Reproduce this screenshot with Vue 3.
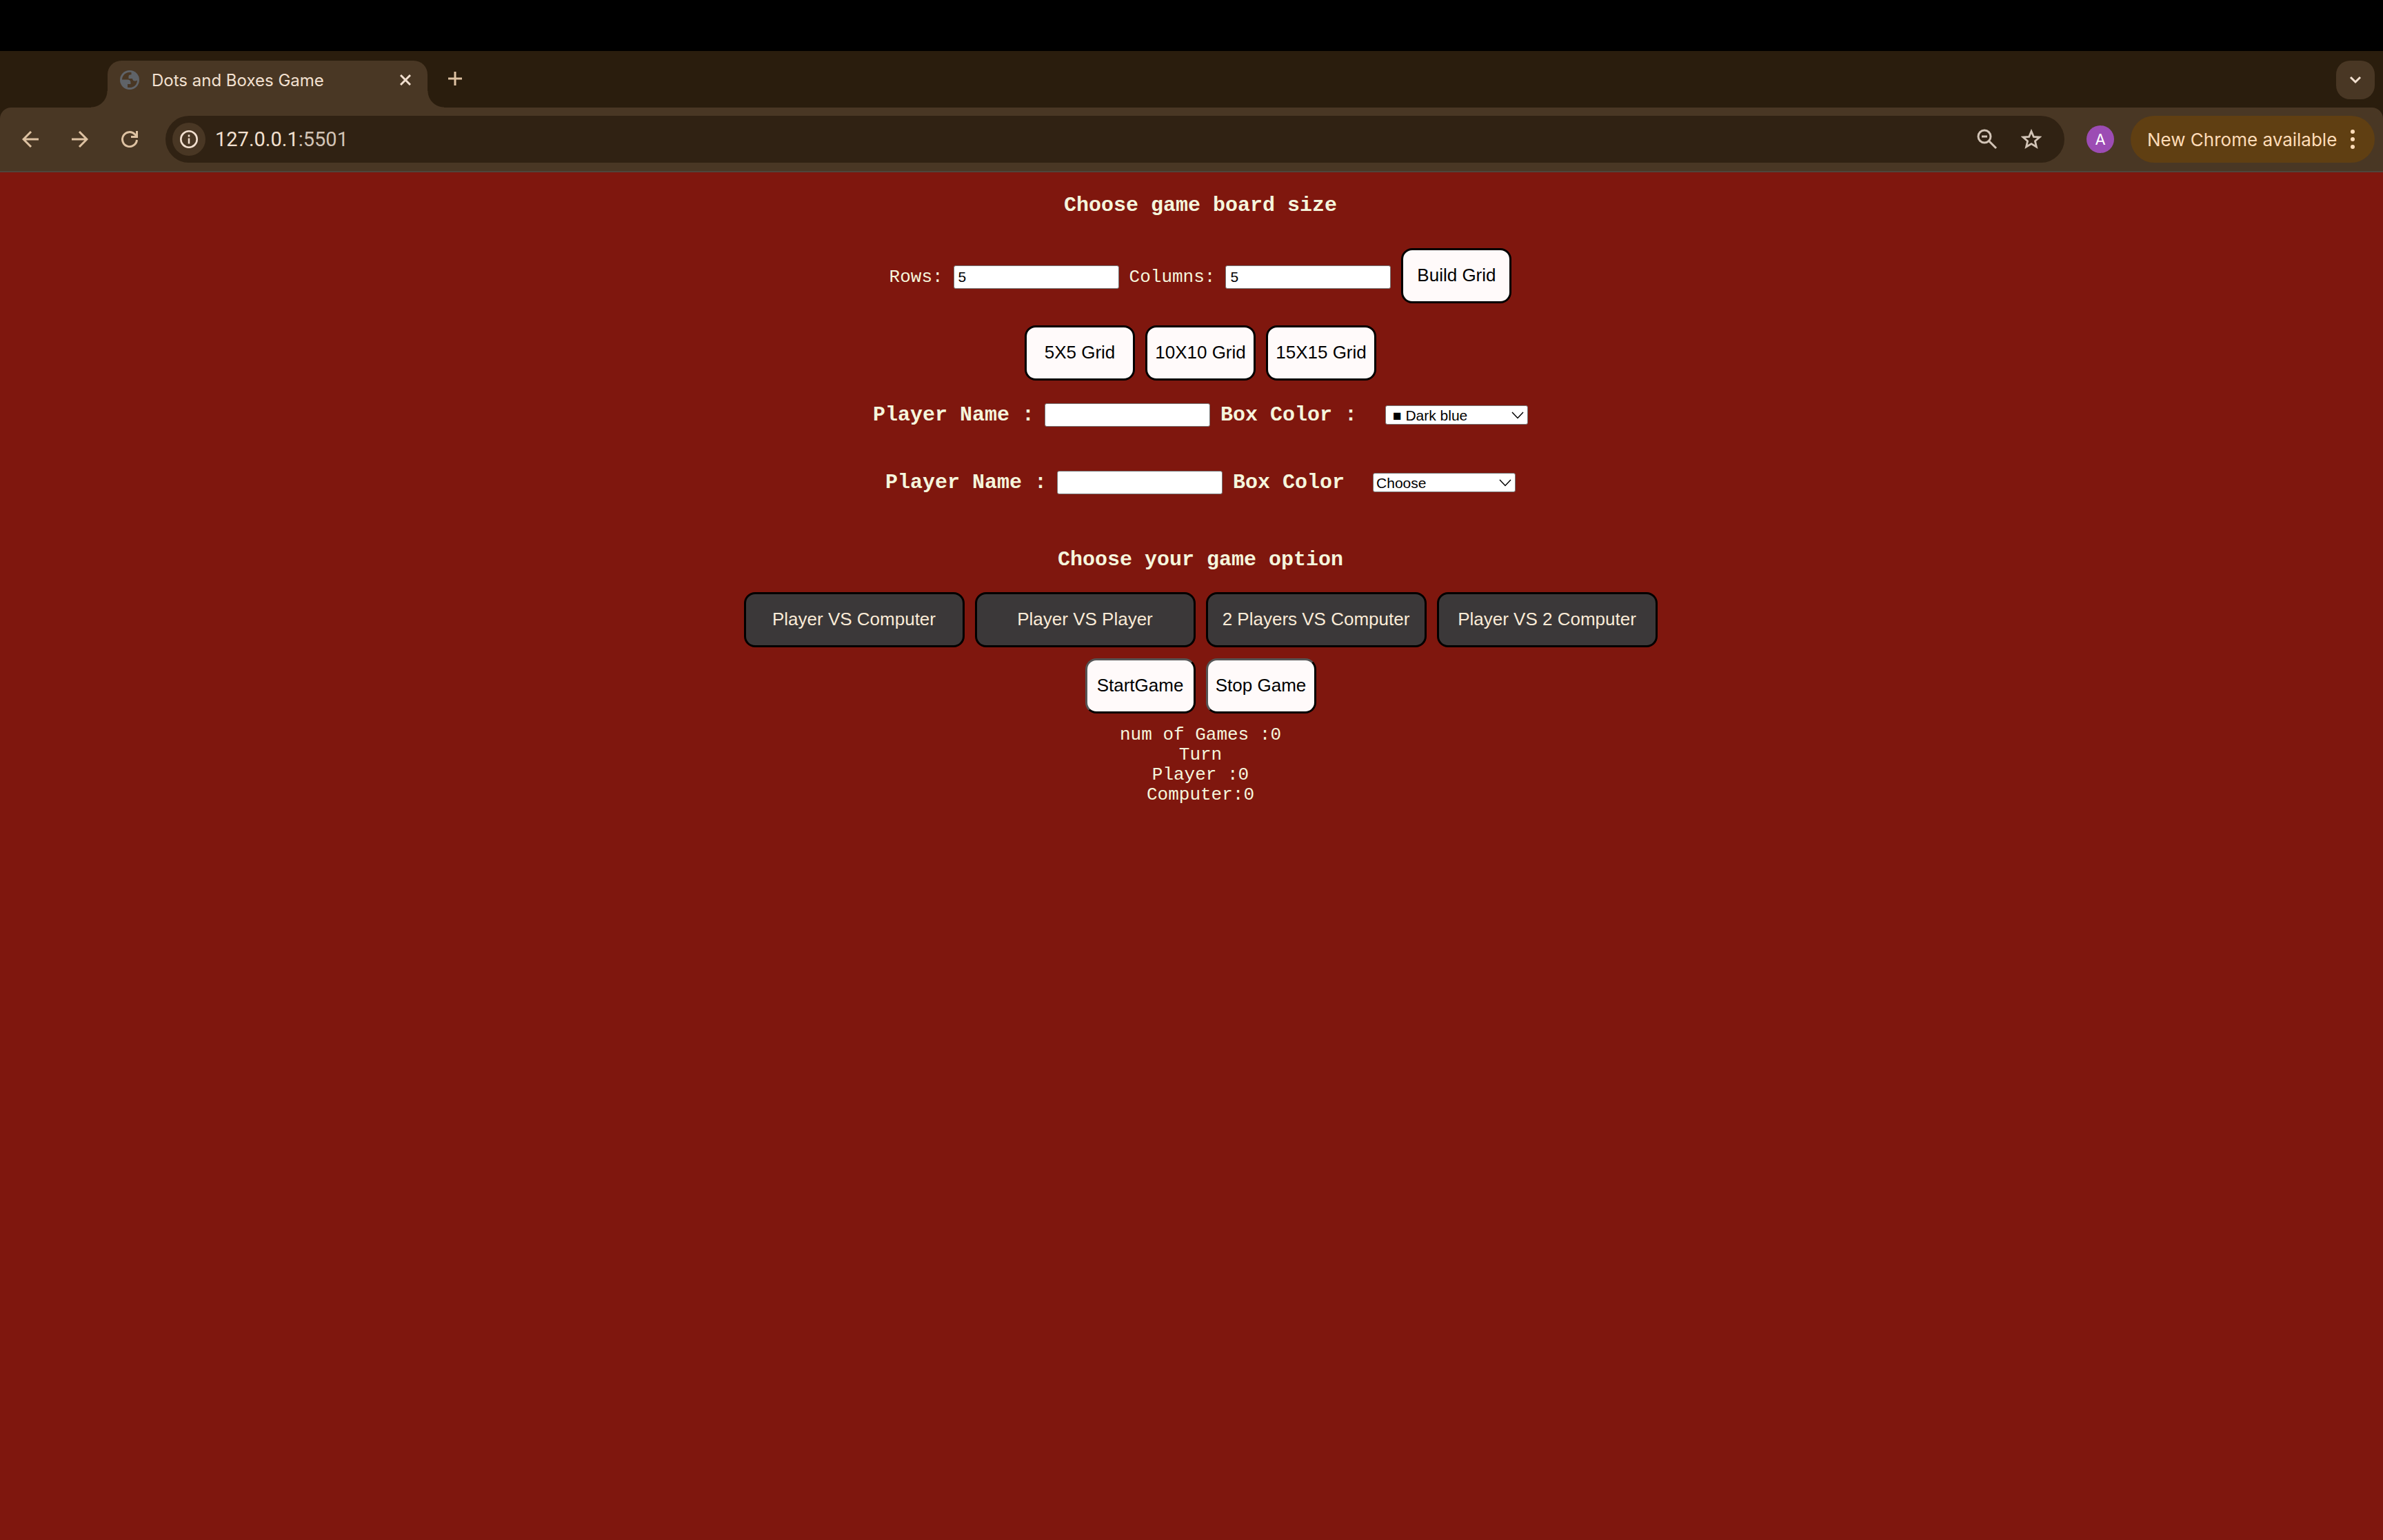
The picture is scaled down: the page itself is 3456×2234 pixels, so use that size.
<script setup>
import { ref } from 'vue'

const rows = ref(5)
const columns = ref(5)
const presets = ['5X5 Grid', '10X10 Grid', '15X15 Grid']
const modes = ['Player VS Computer', 'Player VS Player', '2 Players VS Computer', 'Player VS 2 Computer']
const players = [
  { id: 1, colorLabel: 'Box Color :', choice: '\u00a0■\u00a0Dark blue' },
  { id: 2, colorLabel: 'Box Color', choice: 'Choose' },
]
const scores = ['num of Games :0', 'Turn', 'Player :0', 'Computer:0']
</script>

<template>
  <div class="window">
    <div class="menubar"></div>
    <header>
      <div class="tabstrip">
        <div class="tab">
          <svg class="favicon" viewBox="0 0 28 28" width="28" height="28">
            <circle cx="14" cy="14" r="14" fill="#5f6368" />
            <path d="M16.500 3C10 1.800 3.500 6 3 13.500H11c3 0 4.500 1.500 4.500 4.500v2H11v4.700C18 26.500 25 22 25 14.500c-1 .8-2 1-3.500 1-2.500 0-3-1.500-3.500-3.500h-5.500V9c0-2 1-2.800 4-2.800z" fill="#493724" />
          </svg>
          <span class="title">Dots and Boxes Game</span>
          <button class="plain" aria-label="Close tab">
            <svg viewBox="0 0 16 16" width="16" height="16"><path d="M1 1l14 14M15 1L1 15" stroke="#f2e0d0" stroke-width="3" /></svg>
          </button>
        </div>
        <button class="plain newtab" aria-label="New tab">
          <svg viewBox="0 0 20 20" width="20" height="20"><path d="M10 0v20M0 10h20" stroke="#dec2a2" stroke-width="3" /></svg>
        </button>
        <button class="plain search" aria-label="Search tabs">
          <svg viewBox="0 0 18 12" width="18" height="12"><path d="M2 2l7 7 7-7" fill="none" stroke="#f2e0d0" stroke-width="3" /></svg>
        </button>
      </div>
      <div class="toolbar">
        <nav>
          <button class="plain" aria-label="Back">
            <svg viewBox="0 0 24 24" width="24" height="24"><path d="M24 12H2M13 1L2 12l11 11" fill="none" stroke="#dec2a2" stroke-width="3" /></svg>
          </button>
          <button class="plain" aria-label="Forward">
            <svg viewBox="0 0 24 24" width="24" height="24"><path d="M0 12h22M11 1l11 11-11 11" fill="none" stroke="#dec2a2" stroke-width="3" /></svg>
          </button>
          <button class="plain" aria-label="Reload">
            <svg viewBox="0 0 24 24" width="24" height="24"><path d="M22.500 13A10.500 10.500 0 1 1 19.500 4.700l3 3M22.500 0v8.500H14" fill="none" stroke="#dec2a2" stroke-width="3" /></svg>
          </button>
        </nav>
        <div class="omnibox">
          <button class="plain info" aria-label="View site information">
            <svg viewBox="0 0 26 26" width="26" height="26"><circle cx="13" cy="13" r="11.700" fill="none" stroke="#f2e0d0" stroke-width="2.600" /><path d="M13 11.500v8M13 6.500v3" stroke="#f2e0d0" stroke-width="2.500" /></svg>
          </button>
          <span class="url">127.0.0.1<span class="port">:5501</span></span>
          <button class="plain" aria-label="Zoom">
            <svg viewBox="0 0 30 30" width="30" height="30"><circle cx="11" cy="11" r="9" fill="none" stroke="#d2c4b6" stroke-width="3" /><path d="M7 11h8M17.500 17.500L28 28" stroke="#d2c4b6" stroke-width="3" /></svg>
          </button>
          <button class="plain" aria-label="Bookmark this tab">
            <svg viewBox="0 0 30 30" width="30" height="30"><path d="M15 3.500l3.300 7.800 8.600.7-6.500 5.700 2 8.300L15 21.600 7.600 26l2-8.300L3.100 12l8.600-.7z" fill="none" stroke="#d2c4b6" stroke-width="2.800" /></svg>
          </button>
        </div>
        <button class="plain avatar">A</button>
        <button class="plain update">
          New Chrome available
          <svg viewBox="0 0 6 30" width="6" height="30" fill="#ffdcb8"><circle cx="3" cy="4" r="3" /><circle cx="3" cy="15" r="3" /><circle cx="3" cy="26" r="3" /></svg>
        </button>
      </div>
    </header>

    <main>
      <h3>Choose game board size</h3>
      <div class="row size">
        <label for="rows">Rows:</label>
        <input id="rows" v-model="rows" type="text">
        <label for="columns">Columns:</label>
        <input id="columns" v-model="columns" type="text">
        <button class="btn">Build Grid</button>
      </div>
      <div class="row presets">
        <button v-for="p in presets" :key="p" class="btn">{{ p }}</button>
      </div>
      <div v-for="p in players" :key="p.id" class="row player">
        <label :for="'name' + p.id">Player Name :</label>
        <input :id="'name' + p.id" type="text">
        <label :for="'color' + p.id">{{ p.colorLabel }}</label>
        <span class="picker">
          <select :id="'color' + p.id"><option>{{ p.choice }}</option></select>
          <svg viewBox="0 0 18 12" width="18" height="12"><path d="M1 1l8 8.500 8-8.500" fill="none" stroke="#000" stroke-width="1.500" /></svg>
        </span>
      </div>
      <h3 class="options">Choose your game option</h3>
      <div class="row modes">
        <button v-for="m in modes" :key="m" class="btn mode">{{ m }}</button>
      </div>
      <div class="row controls">
        <button class="btn raised">StartGame</button>
        <button class="btn raised">Stop Game</button>
      </div>
      <div v-for="s in scores" :key="s" class="score">{{ s }}</div>
    </main>
  </div>
</template>

<style>
body { margin: 0; background: #7f170e; }
</style>

<style scoped>
* { box-sizing: border-box; }
.window { min-height: 100vh; display: flex; flex-direction: column; background: #7f170e; }
svg { display: block; flex: none; }
.menubar { height: 74px; background: #000; }
header { background: #2a1d0d; font-family: Inter, "Liberation Sans", sans-serif; }
.plain { border: 0; padding: 0; background: none; font: inherit; color: inherit; display: flex; align-items: center; justify-content: center; flex: none; }

.tabstrip { display: flex; height: 82px; padding: 14px 12px 0 156px; }
.tab { position: relative; width: 464px; height: 68px; padding: 0 24px 12px 18px; display: flex; align-items: center; background: #493724; border-radius: 20px 20px 0 0; color: #f2e0d0; font-size: 24px; }
.tab::before, .tab::after { content: ""; position: absolute; bottom: 0; width: 24px; height: 24px; }
.tab::before { right: 100%; background: radial-gradient(circle at 0 0, transparent 23px, #493724 24px); }
.tab::after { left: 100%; background: radial-gradient(circle at 100% 0, transparent 23px, #493724 24px); }
.title { flex: 1; margin-left: 18px; }
.newtab { width: 40px; height: 52px; margin-left: 20px; }
.search { width: 56px; height: 56px; margin-left: auto; border-radius: 20px; background: #493724; }

.toolbar { height: 94px; padding: 10px 12px 10px 32px; display: flex; align-items: center; background: #493724; border-bottom: 2px solid #4f453b; border-radius: 16px 16px 0 0; }
nav { display: flex; gap: 48px; margin-right: 40px; }
.omnibox { flex: 1; height: 68px; padding: 0 33px 0 10px; display: flex; align-items: center; gap: 34px; border-radius: 34px; background: #302213; color: #f2e0d0; }
.info { width: 48px; height: 48px; border-radius: 50%; background: #493724; }
.url { flex: 1; margin-left: -20px; font-family: Roboto, "Liberation Sans", sans-serif; font-size: 29px; }
.port { color: #d2c4b6; }
.avatar { width: 40px; height: 40px; margin: 0 24px 0 32px; border-radius: 50%; background: #9c4cb4; color: #fff; font-size: 22px; }
.update { width: 354px; height: 68px; padding: 0 29px 0 24px; justify-content: space-between; border-radius: 34px; background: #603f12; color: #ffdcb8; font-size: 26px; white-space: nowrap; }

main { padding: 31px 0 0 26px; flex: 1; color: beige; font-family: "Liberation Mono", monospace; font-size: 26px; line-height: 29px; }
h3 { margin: 0; font-size: 30px; line-height: 34px; text-align: center; }
.row { display: flex; justify-content: center; align-items: center; gap: 15px; }
input, select { font-family: "Liberation Sans", sans-serif; font-size: 21px; color: #000; background: #fff; border: 1px solid #767676; border-radius: 3px; }
input { width: 240px; height: 34px; padding: 0 6px; }
.btn { width: 160px; height: 80px; padding: 0 0 2px; border: 3px solid #000; border-radius: 16px; background: snow; color: #000; font-family: "Liberation Sans", sans-serif; font-size: 26px; white-space: nowrap; }
.mode { width: 320px; background: #3b3839; color: antiquewhite; }
.raised { border-color: #555 #000 #000 #555; }
.size { margin-top: 45px; }
.size label, .size input { margin-top: 4px; }
.presets { margin: 32px 0 33px; }
.player { height: 34px; margin-bottom: 64px; font-size: 30px; font-weight: bold; }
.picker { position: relative; margin-left: 26px; display: flex; }
.picker svg { position: absolute; right: 6px; top: 9px; pointer-events: none; }
select { appearance: none; width: 207px; height: 28px; padding: 0 0 0 4px; }
.options { margin-top: 78px; }
.modes { margin-top: 30px; }
.controls { margin: 16px 0 17px; }
.score { text-align: center; }
</style>
